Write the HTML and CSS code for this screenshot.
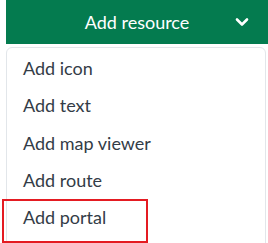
FILE: index.html
```html
<!DOCTYPE html>
<html lang="en">
<head>
    <meta charset="UTF-8" />
    <meta name="viewport" content="width=device-width, initial-scale=1.0" />
    <title>Add resource</title>
    <link rel="stylesheet" href="styles.css">
</head>
<body>
    <div class="resource-menu">
        <button class="resource-toggle">
            <span class="toggle-label">Add resource</span>
            <svg class="toggle-chevron" width="14" height="10" viewBox="0 0 14 10">
                <path d="M2 2.5 L7 7.5 L12 2.5" fill="none" stroke="#ffffff" stroke-width="2.6" stroke-linecap="round" stroke-linejoin="round" />
            </svg>
        </button>
        <ul class="resource-list">
            <li>Add icon</li>
            <li>Add text</li>
            <li>Add map viewer</li>
            <li>Add route</li>
            <li class="highlighted">Add portal</li>
        </ul>
    </div>
</body>
</html>
```

FILE: styles.css
```css
body {
    font-family: Lato, "Noto Sans", sans-serif;
    color: #333c47;
    margin: 0;
    background-color: #ffffff;
    height: 243px;
    overflow: hidden;
}

.resource-menu {
    padding-left: 6px;
    position: relative;
}

.resource-toggle {
    display: flex;
    align-items: center;
    width: 100%;
    height: 44px;
    padding: 0 19px 0 33px;
    border: none;
    background-color: #047b4f;
    color: #ffffff;
    font-family: inherit;
    font-size: 18px;
    cursor: pointer;
}

.toggle-label {
    flex: 1;
    text-align: center;
}

.toggle-chevron {
    display: block;
}

.resource-list {
    list-style: none;
    margin: 3px 2px 0 0;
    padding: 2px 0 0 0;
    height: 200px;
    border: 1px solid #e2e6ea;
    border-radius: 6px;
    font-size: 18px;
}

.resource-list li {
    padding: 8px 16px;
    line-height: 21.25px;
    position: relative;
}

.resource-list li.highlighted::after {
    content: "";
    position: absolute;
    left: -5px;
    top: 0;
    width: 142px;
    height: 40px;
    border: 2px solid #e41b22;
}
```
